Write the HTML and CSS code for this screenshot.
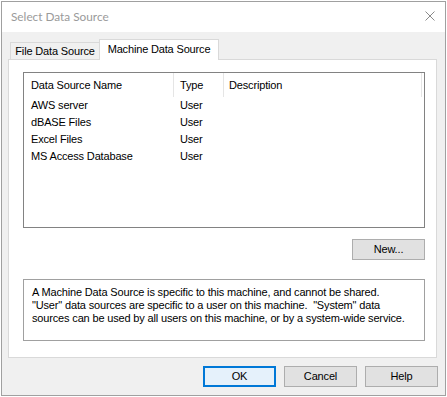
FILE: index.html
```html
<!DOCTYPE html>
<html>
<head>
<meta charset="utf-8">
<link rel="stylesheet" href="styles.css">
</head>
<body>
<div class="window">
  <div class="titlebar">
    <span class="title">Select Data Source</span>
    <svg class="close" width="10" height="10" viewBox="0 0 10 10"><path d="M0.5 0.5 L9.5 9.5 M9.5 0.5 L0.5 9.5" stroke="#8a8a8a" stroke-width="1" fill="none"/></svg>
  </div>
  <div class="content">
    <div class="tabs">
      <div class="tab">File Data Source</div>
      <div class="tab active">Machine Data Source</div>
    </div>
    <div class="panel">
      <div class="list">
        <div class="list-head">
          <div class="cell c1">Data Source Name</div>
          <div class="cell c2">Type</div>
          <div class="cell c3">Description</div>
        </div>
        <div class="row"><div class="cell c1">AWS server</div><div class="cell c2">User</div><div class="cell c3"></div></div>
        <div class="row"><div class="cell c1">dBASE Files</div><div class="cell c2">User</div><div class="cell c3"></div></div>
        <div class="row"><div class="cell c1">Excel Files</div><div class="cell c2">User</div><div class="cell c3"></div></div>
        <div class="row"><div class="cell c1">MS Access Database</div><div class="cell c2">User</div><div class="cell c3"></div></div>
      </div>
      <div class="new-row"><button class="btn">New...</button></div>
      <div class="desc">
        <div class="line">A Machine Data Source is specific to this machine, and cannot be shared.</div>
        <div class="line">"User" data sources are specific to a user on this machine.  "System" data</div>
        <div class="line">sources can be used by all users on this machine, or by a system-wide service.</div>
      </div>
    </div>
    <div class="buttons">
      <button class="btn default">OK</button>
      <button class="btn">Cancel</button>
      <button class="btn">Help</button>
    </div>
  </div>
</div>
</body>
</html>
```

FILE: styles.css
```css
html, body {
  margin: 0;
  padding: 0;
  background: #ffffff;
  width: 447px;
  height: 397px;
  overflow: hidden;
}

.window {
  box-sizing: border-box;
  margin: 1px 0 0 1px;
  width: 445px;
  height: 395px;
  border: 1px solid #a0a0a0;
  display: flex;
  flex-direction: column;
  font-family: "Liberation Sans", Arial, sans-serif;
  font-size: 11px;
  letter-spacing: -0.16px;
  color: #000;
}

.titlebar {
  height: 30px;
  background: #ffffff;
  display: flex;
  align-items: center;
  justify-content: space-between;
  padding: 0 10px 1px 9px;
  box-sizing: border-box;
}

.title {
  font-family: Lato, "Noto Sans", sans-serif;
  font-size: 11.8px;
  letter-spacing: 0;
  color: #9a9a9a;
}

.close {
  display: block;
  margin-top: -1px;
}

.content {
  flex: 1;
  background: #f0f0f0;
  padding: 7px 7px 0 6px;
  display: flex;
  flex-direction: column;
}

.tabs {
  display: flex;
  align-items: flex-end;
  padding-left: 2px;
}

.tab {
  box-sizing: border-box;
  width: 90px;
  height: 17px;
  line-height: 16px;
  border: 1px solid #d9d9d9;
  border-bottom: none;
  background: #f0f0f0;
  text-align: center;
}

.tab.active {
  width: 120px;
  height: 21px;
  line-height: 18px;
  margin-left: -1px;
  margin-bottom: -1px;
  background: #ffffff;
  position: relative;
  z-index: 1;
}

.panel {
  box-sizing: border-box;
  width: 429px;
  height: 299px;
  border: 1px solid #d9d9d9;
  background: #ffffff;
  padding: 12px 0 0 14px;
}

.list {
  box-sizing: border-box;
  width: 402px;
  height: 156px;
  border: 1px solid #828282;
  background: #ffffff;
}

.list-head {
  display: flex;
  height: 24px;
}

.list-head .cell {
  box-sizing: border-box;
  height: 24px;
  padding-top: 1px;
  line-height: 23px;
  border-right: 1px solid #e5e5e5;
}

.row {
  display: flex;
  height: 17px;
  line-height: 17px;
}

.cell {
  white-space: nowrap;
  box-sizing: border-box;
}

.c1 { width: 150px; padding-left: 7px; }
.c2 { width: 50px; padding-left: 6px; }
.c3 { width: 198px; padding-left: 5px; }

.row .cell { border-right: 1px solid transparent; }

.new-row {
  width: 402px;
  display: flex;
  justify-content: flex-end;
  margin-top: 11px;
}

.btn {
  box-sizing: border-box;
  width: 73px;
  height: 21px;
  padding: 0;
  margin: 0;
  border: 1px solid #adadad;
  background: #e1e1e1;
  font-family: "Liberation Sans", Arial, sans-serif;
  font-size: 11px;
  letter-spacing: -0.16px;
  line-height: 19px;
  color: #000;
  text-align: center;
}

.btn.default {
  border: 2px solid #0078d7;
  background: #e5f1fb;
  line-height: 17px;
}

.desc {
  box-sizing: border-box;
  width: 402px;
  height: 62px;
  margin-top: 19px;
  border: 1px solid #a0a0a0;
  padding: 6px 0 0 8px;
  line-height: 13px;
}

.line {
  white-space: pre;
}

.buttons {
  display: flex;
  justify-content: flex-end;
  gap: 8px;
  margin-top: 8px;
}
```
